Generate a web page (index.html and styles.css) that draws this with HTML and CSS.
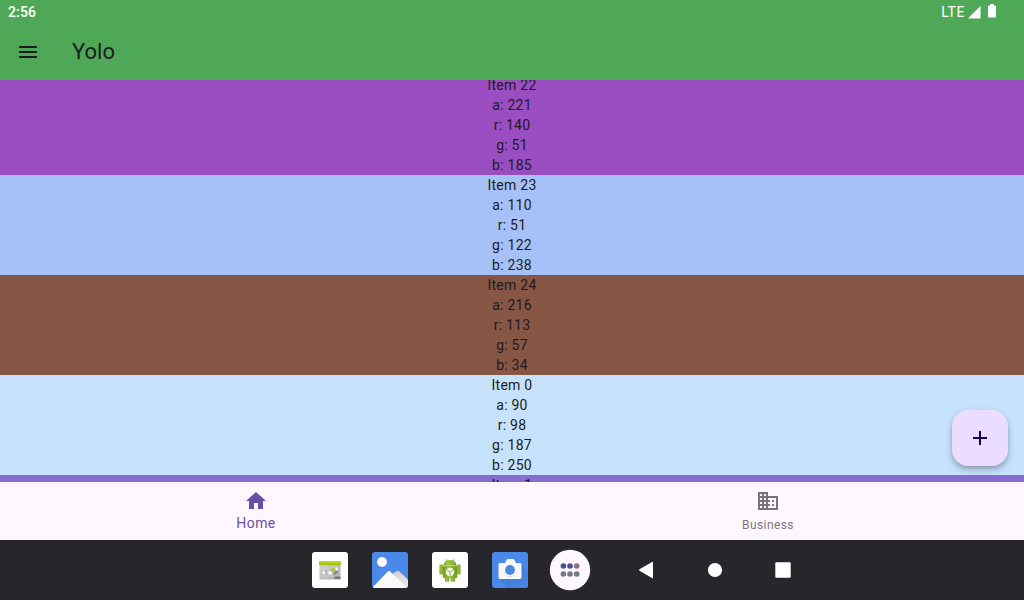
FILE: index.html
```html
<!DOCTYPE html>
<html lang="en">
<head>
<meta charset="utf-8">
<title>Yolo</title>
<link rel="stylesheet" href="styles.css">
</head>
<body>
<div class="screen">
  <header class="top">
    <div class="status">
      <span class="clock">2:56</span>
      <span class="network">LTE</span>
      <svg class="signal" width="13" height="13" viewBox="0 0 13 13"><path d="M12.500 0v12.500H0z"/></svg>
      <svg class="battery" width="8" height="14" viewBox="0 0 8 14"><path d="M2 0h4v1.500h1q1 0 1 1v10q0 1-1 1H1q-1 0-1-1v-10q0-1 1-1h1z"/></svg>
    </div>
    <div class="appbar">
      <svg class="menu" width="24" height="24" viewBox="0 0 24 24"><path d="M3 18h18v-2H3zm0-5h18v-2H3zm0-7v2h18V6z"/></svg>
      <h1 class="title">Yolo</h1>
    </div>
  </header>
  <main class="body">
    <div class="list">
      <div class="item purple"><p>Item 22</p><p>a: 221</p><p>r: 140</p><p>g: 51</p><p>b: 185</p></div>
      <div class="item blue"><p>Item 23</p><p>a: 110</p><p>r: 51</p><p>g: 122</p><p>b: 238</p></div>
      <div class="item brown"><p>Item 24</p><p>a: 216</p><p>r: 113</p><p>g: 57</p><p>b: 34</p></div>
      <div class="item sky"><p>Item 0</p><p>a: 90</p><p>r: 98</p><p>g: 187</p><p>b: 250</p></div>
      <div class="item violet"><p>Item 1</p></div>
    </div>
    <button class="fab" aria-label="Add"><svg width="24" height="24" viewBox="0 0 24 24"><path d="M19 13h-6v6h-2v-6H5v-2h6V5h2v6h6z"/></svg></button>
  </main>
  <nav class="tabs">
    <div class="tab active">
      <svg width="24" height="24" viewBox="0 0 24 24"><path d="M10 20v-6h4v6h5v-8h3L12 3 2 12h3v8z"/></svg>
      <span>Home</span>
    </div>
    <div class="tab">
      <svg width="24" height="24" viewBox="0 0 24 24"><path d="M12 7V3H2v18h20V7H12zM6 19H4v-2h2v2zm0-4H4v-2h2v2zm0-4H4V9h2v2zm0-4H4V5h2v2zm4 12H8v-2h2v2zm0-4H8v-2h2v2zm0-4H8V9h2v2zm0-4H8V5h2v2zm10 12h-8v-2h2v-2h-2v-2h2v-2h-2V9h8v10zm-2-8h-2v2h2v-2zm0 4h-2v2h2v-2z"/></svg>
      <span>Business</span>
    </div>
  </nav>
  <footer class="dock">
    <div class="apps">
      <svg width="36" height="36" viewBox="0 0 36 36">
        <defs><linearGradient id="lime" x2="0" y2="1"><stop stop-color="#c4dc22"/><stop offset="1" stop-color="#98bd12"/></linearGradient>
        <linearGradient id="grey" x2="1" y2="1"><stop stop-color="#d4d4d4"/><stop offset="1" stop-color="#a9a9a9"/></linearGradient></defs>
        <rect width="36" height="36" rx="3" fill="#fff"/>
        <rect x="7.500" y="13" width="21" height="14.500" fill="url(#grey)"/>
        <path d="M7.500 17h21M7.500 20.500h21M7.500 24h21M12 13v14M16 13v14M20 13v14M24 13v14" stroke="#e0e0e0" stroke-width=".3"/>
        <rect x="7" y="9" width="22" height="4.200" fill="url(#lime)"/>
        <path d="M21 17.500l5-1v4l-4 3z" fill="#8c8c8c"/><path d="M11 21l2-3h2v4z" fill="#aaa"/>
        <circle cx="12" cy="20.500" r="1.700" fill="#eee"/><circle cx="18" cy="21" r="2" fill="#f1f1f1"/><circle cx="24.500" cy="17" r="1.700" fill="#f5f5f5"/><circle cx="21.200" cy="17.800" r="2.400" fill="#a9cc42"/>
        <rect x="22.500" y="24.500" width="6" height="2.500" fill="#777"/>
      </svg>
      <svg width="36" height="36" viewBox="0 0 36 36">
        <defs><clipPath id="tile"><rect width="36" height="36" rx="3"/></clipPath>
        <linearGradient id="snow" x2="0" y2="1"><stop stop-color="#cfcfd1"/><stop offset="1" stop-color="#f0f0f1"/></linearGradient></defs>
        <g clip-path="url(#tile)"><path fill="#4a88ea" d="M0 0h36v36H0z"/>
        <path d="M17 24l7.500-4.700q2-1.200 4 1l8 8v9H17z" fill="url(#snow)"/>
        <path d="M0 36l15.500-16.300q1.500-1.500 3 0L35 36z" fill="#fafafa"/></g>
        <circle cx="10" cy="10.500" r="5" fill="#3273ce" opacity=".6"/><circle cx="10" cy="10" r="5" fill="#fafafa"/>
      </svg>
      <svg width="36" height="36" viewBox="0 0 36 36">
        <defs><linearGradient id="droid" x2="1"><stop stop-color="#719b24"/><stop offset=".4" stop-color="#a1c63d"/><stop offset="1" stop-color="#6e9923"/></linearGradient></defs>
        <rect width="36" height="36" rx="3" fill="#fff"/>
        <path d="M14 7l1.500 3M22 7l-1.500 3" stroke="#8baa50" stroke-width=".8"/>
        <g fill="url(#droid)"><path d="M11.500 13.500q.5-5.500 6.500-5.500t6.500 5.500z"/><rect x="10.800" y="13.800" width="14.400" height="12.200" rx="1.500"/><rect x="7.500" y="12.500" width="3.800" height="10" rx="1"/><rect x="24.700" y="12.500" width="3.800" height="10" rx="1"/><rect x="13" y="25" width="4.300" height="4.800" rx="1"/><rect x="18.700" y="25" width="4.300" height="4.800" rx="1"/></g>
        <path d="M11 13.700h14" stroke="#c4d894" stroke-width=".5"/><circle cx="15" cy="11" r=".6" fill="#fff"/><circle cx="21" cy="11" r=".6" fill="#fff"/>
        <circle cx="18" cy="20" r="4.200" fill="#f4f8ec"/><path d="M18 20v4M18 20l-3.500-2M18 20l3.500-2" stroke="#8fb345" stroke-width=".9"/>
      </svg>
      <svg width="36" height="36" viewBox="0 0 36 36">
        <defs><linearGradient id="cast" x2="1" y2="1"><stop stop-color="#3b73cb"/><stop offset="1" stop-color="#4a88ea"/></linearGradient></defs>
        <rect width="36" height="36" rx="3" fill="#4a88ea"/>
        <path d="M29 12l7 7v14q0 3-3 3H16l-8-9z" fill="url(#cast)"/>
        <path d="M8 11h5l1.500-3q.6-1 1.500-1h5q.9 0 1.500 1l1.500 3h4q1.500 0 1.500 1.500V25q0 2-1.500 2H8q-1.500 0-1.500-2V12.500Q6.500 11 8 11z" fill="#f8f8f8"/>
        <circle cx="18" cy="18.600" r="6.600" fill="#d5d9df"/><circle cx="18" cy="18" r="6.300" fill="#fff"/><circle cx="18" cy="18" r="4.900" fill="#4a85df"/>
      </svg>
      <svg class="drawer" width="40" height="40" viewBox="0 0 40 40">
        <circle cx="20" cy="20" r="20.200" fill="#fdf8ff"/>
        <g fill="#47528f"><circle cx="13.400" cy="16" r="2.800"/><circle cx="20" cy="16" r="2.800"/></g><circle cx="26.700" cy="16" r="2.800" fill="#936b83"/>
        <g fill="#70788a"><circle cx="13.400" cy="24" r="2.800"/><circle cx="20" cy="24" r="2.800"/><circle cx="26.700" cy="24" r="2.800"/></g>
      </svg>
    </div>
    <svg class="system" width="154" height="20" viewBox="0 0 154 20" fill="#fff"><path d="M1.500 9.300L14 1.900q1-.5 1 .5v15.200q0 1-1 .5L1.500 10.700q-1-.7 0-1.400z"/><circle cx="77" cy="10" r="7.100"/><rect x="137.300" y="2.300" width="15.400" height="15.400" rx="1"/></svg>
  </footer>
</div>
</body>
</html>
```
FILE: styles.css
```css
* { box-sizing: border-box; }
body { margin: 0; font-family: Roboto, "Noto Sans", sans-serif; }
svg { display: block; flex: none; }
.screen { width: 1024px; height: 600px; display: flex; flex-direction: column; overflow: hidden; background: #fef7ff; }
.top { height: 80px; flex: none; background: #4fa858; color: #1d1b20; }
.status { height: 24px; padding: 0 28px 0 8px; display: flex; align-items: center; color: #fff; fill: #fff; font-size: 14px; line-height: 24px; }
.clock { font-weight: 500; margin-right: auto; letter-spacing: .15px; }
.network { margin-right: 3px; letter-spacing: .6px; }
.signal { margin-right: 7px; }
.battery { margin-top: -3px; }
.appbar { height: 56px; padding-left: 16px; display: flex; align-items: center; gap: 32px; }
.menu { fill: #1d1b20; }
.title { margin: 0; font-size: 22px; line-height: 28px; font-weight: 400; }
.body { height: 402px; flex: none; position: relative; overflow: hidden; }
.list { margin-top: -5px; }
.item { height: 100px; text-align: center; color: #1d1b20; font-size: 14px; line-height: 20px; letter-spacing: .25px; }
.item p { margin: 0; }
.purple { background: #9b4dc2; }
.blue { background: #a6c1f8; }
.brown { background: #875644; }
.sky { background: #c7e2fd; }
.violet { background: #886bd1; }
.fab { position: absolute; right: 16px; bottom: 16px; width: 56px; height: 56px; padding: 0; border: 0; border-radius: 16px; display: grid; place-items: center; background: #eaddff; fill: #21005d; box-shadow: 0 3px 5px -1px rgba(0,0,0,.22), 0 5px 8px rgba(0,0,0,.12), 0 1px 8px rgba(0,0,0,.06); }
.tabs { height: 58px; flex: none; display: flex; background: #fef7ff; }
.tab { flex: 1; display: flex; flex-direction: column; align-items: center; padding-top: 7px; color: #7b797c; fill: #757575; font-size: 12px; line-height: 24px; letter-spacing: .4px; }
.tab.active { color: #6750a4; fill: #6750a4; font-size: 14px; line-height: 20px; letter-spacing: .4px; }
.dock { height: 60px; flex: none; padding-left: 312px; display: flex; align-items: center; gap: 48px; background: #27262b; }
.apps { display: flex; align-items: center; gap: 24px; }
.drawer { margin-left: -2px; overflow: visible; }
```
